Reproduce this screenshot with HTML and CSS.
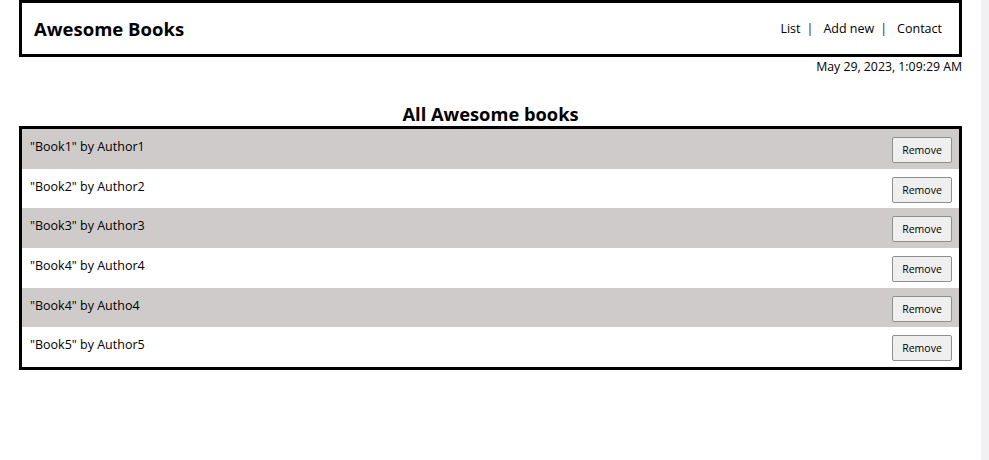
FILE: index.html
```html
<!DOCTYPE html>
<html lang="en">
<head>
<meta charset="utf-8">
<title>Awesome Books</title>
<link rel="stylesheet" href="styles.css">
</head>
<body>
<main class="page">
  <header class="topbar">
    <h1 class="brand">Awesome Books</h1>
    <nav class="nav">
      <a class="nav-link" href="#">List</a>
      <span class="sep">|</span>
      <a class="nav-link" href="#">Add new</a>
      <span class="sep">|</span>
      <a class="nav-link" href="#">Contact</a>
    </nav>
  </header>
  <p class="date">May 29, 2023, 1:09:29 AM</p>
  <h2 class="section-title">All Awesome books</h2>
  <ul class="books">
    <li class="book alt"><span class="book-text">"Book1" by Author1</span><button class="remove">Remove</button></li>
    <li class="book"><span class="book-text">"Book2" by Author2</span><button class="remove">Remove</button></li>
    <li class="book alt"><span class="book-text">"Book3" by Author3</span><button class="remove">Remove</button></li>
    <li class="book"><span class="book-text">"Book4" by Author4</span><button class="remove">Remove</button></li>
    <li class="book alt"><span class="book-text">"Book4" by Autho4</span><button class="remove">Remove</button></li>
    <li class="book"><span class="book-text">"Book5" by Author5</span><button class="remove">Remove</button></li>
  </ul>
</main>
<div class="scrollbar"></div>
</body>
</html>
```
FILE: styles.css
```css
html, body {
  margin: 0;
  padding: 0;
  height: 100%;
}
body {
  display: flex;
  font-family: "Open Sans", "Noto Sans", sans-serif;
  color: #000;
  background: #fff;
  overflow: hidden;
}
.page {
  flex: 1;
  padding: 0 19px;
}
.scrollbar {
  width: 8px;
  background: #f1f1f3;
}
.topbar {
  height: 51px;
  border: 3px solid #000;
  display: flex;
  align-items: center;
  justify-content: space-between;
  padding: 0 17px 0 12px;
}
.brand {
  margin: 0;
  font-size: 18.5px;
  font-weight: 700;
}
.nav {
  display: flex;
  align-items: center;
  font-size: 12.5px;
}
.nav-link {
  color: #000;
  text-decoration: none;
}
.sep {
  color: #222;
  margin: 0 10px 0 6px;
}
.date {
  margin: 1px 0 0;
  text-align: right;
  font-size: 12.3px;
  line-height: 18px;
}
.section-title {
  margin: 26px 0 0;
  text-align: center;
  font-size: 18.3px;
  font-weight: 700;
  line-height: 24px;
}
.books {
  list-style: none;
  margin: 0;
  padding: 0;
  border: 3px solid #000;
}
.book {
  display: flex;
  align-items: flex-start;
  justify-content: space-between;
  height: 39.67px;
  box-sizing: border-box;
  padding: 8px 7px 0 8px;
  background: #fff;
}
.book.alt {
  background: #cfcbcb;
}
.book-text {
  font-size: 12.5px;
  line-height: 18px;
  padding-top: 1px;
}
.remove {
  width: 60px;
  height: 26px;
  font-family: "Open Sans", "Noto Sans", sans-serif;
  font-size: 10.5px;
  background: #efefef;
  border: 1px solid #8f8f8f;
  border-radius: 2px;
  color: #000;
  padding: 0;
}
```
